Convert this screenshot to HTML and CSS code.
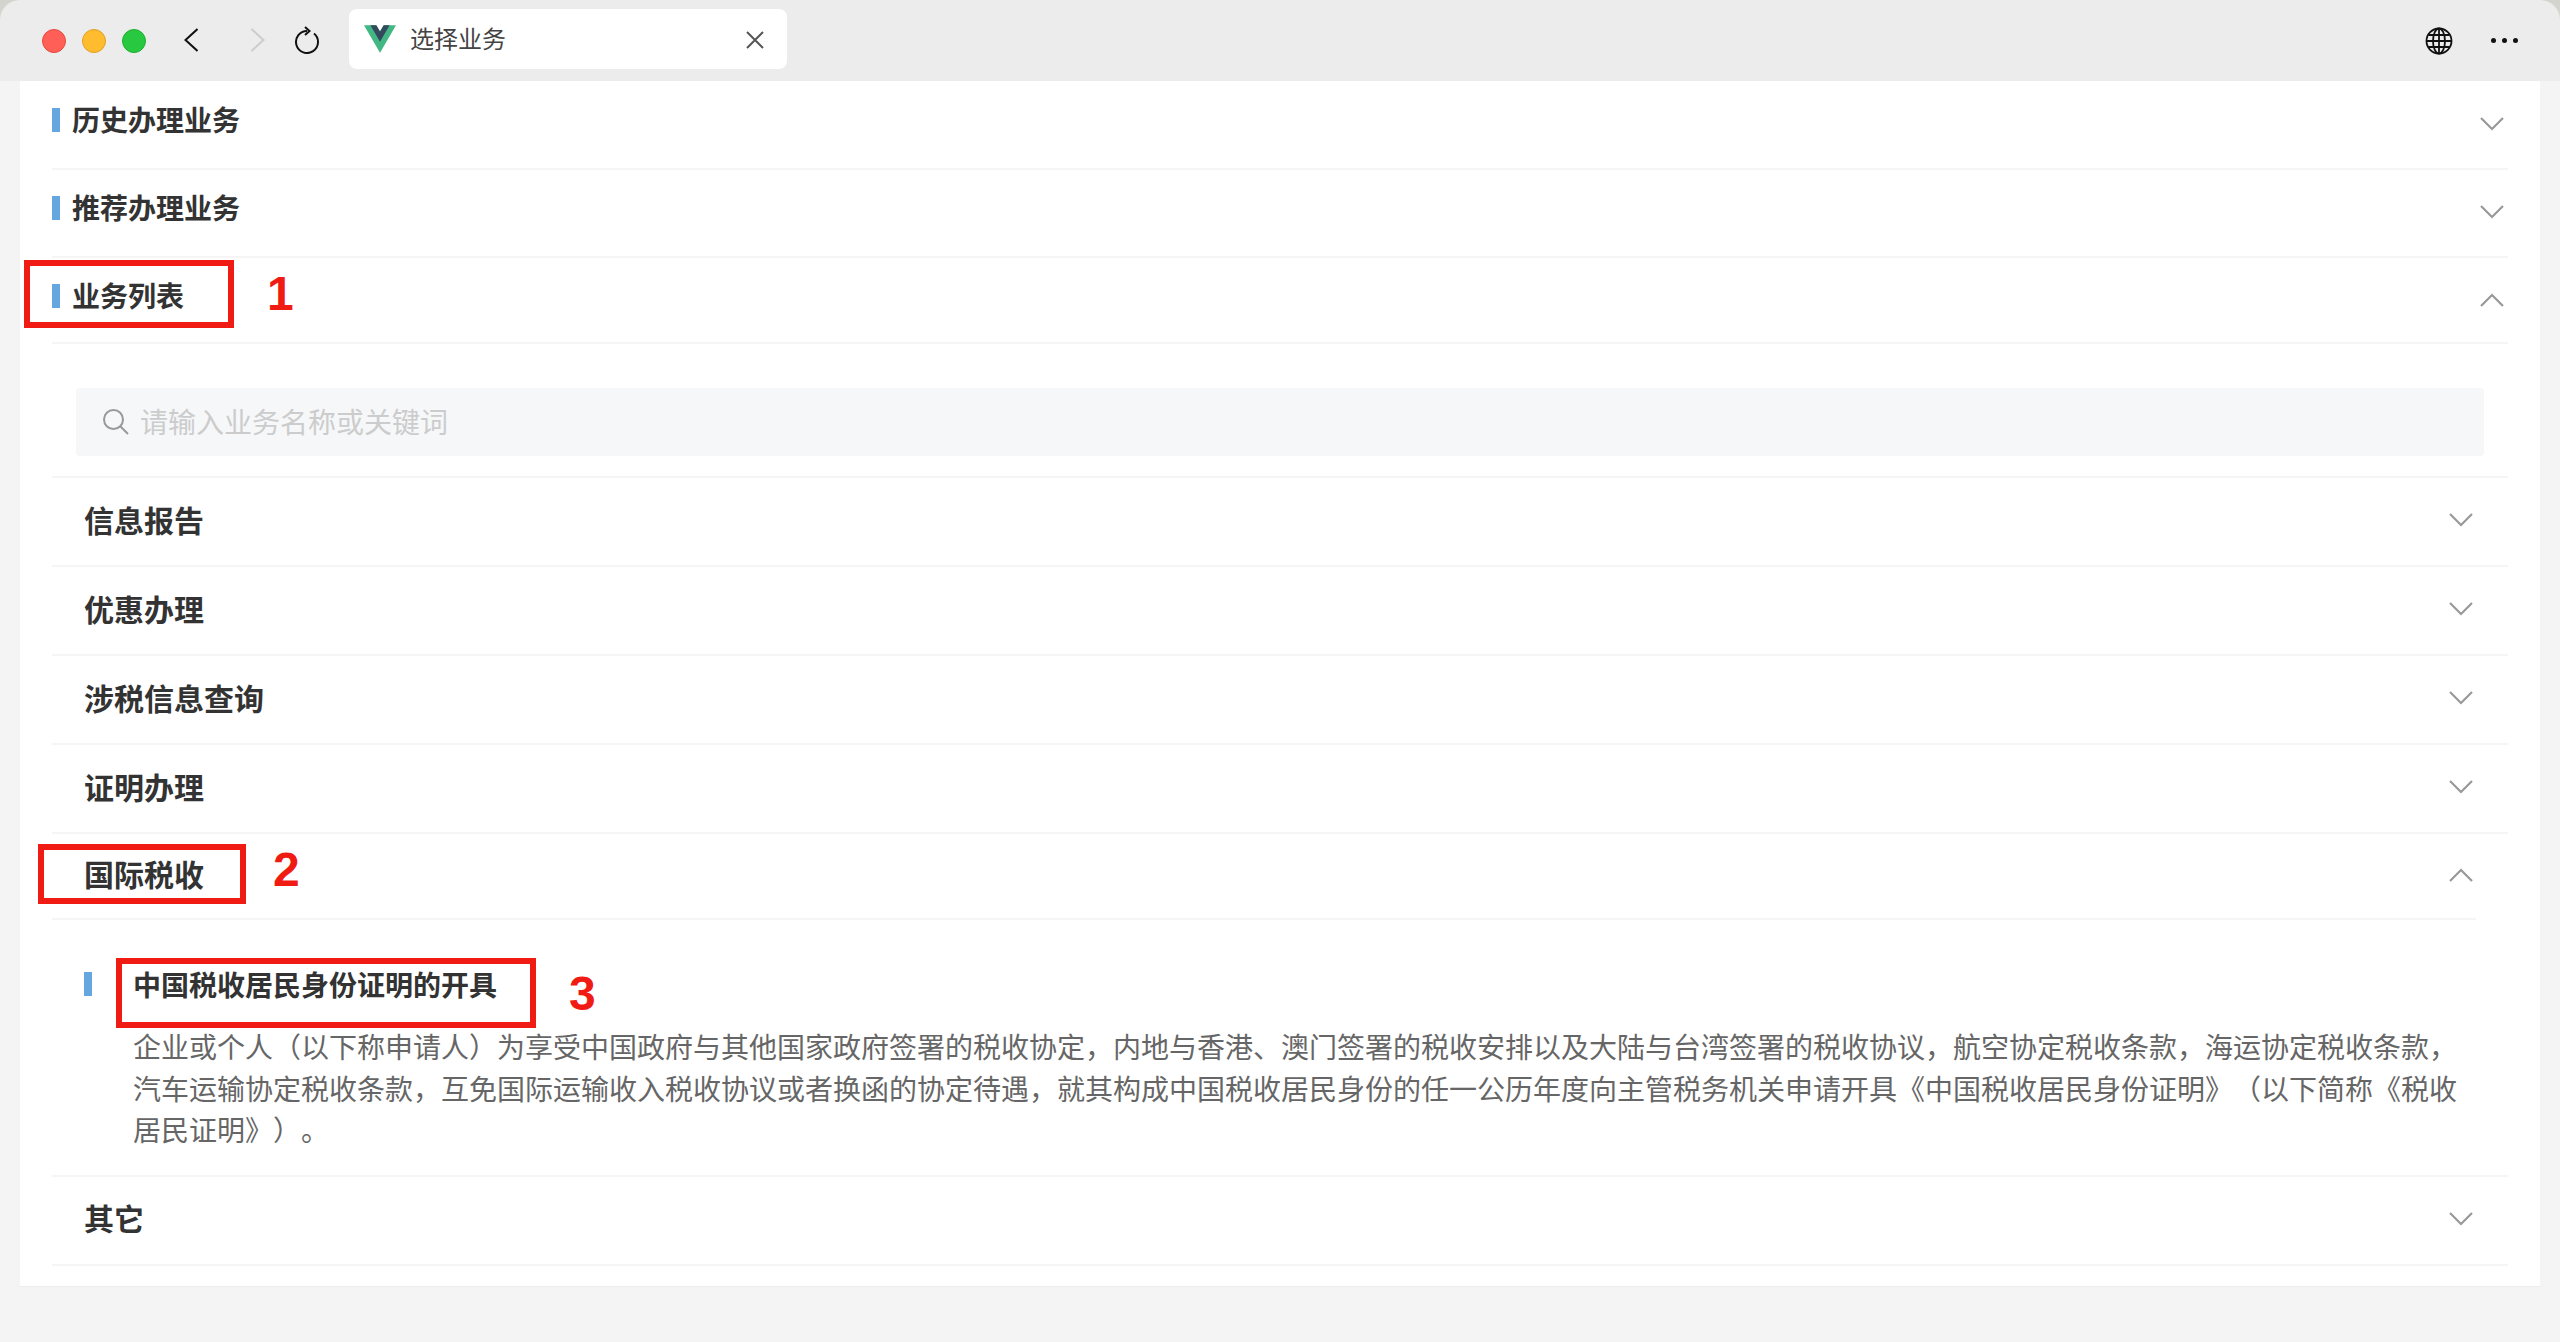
FILE: index.html
```html
<!DOCTYPE html>
<html lang="zh-CN">

<head>
    <meta charset="UTF-8">
    <meta name="viewport" content="width=device-width, initial-scale=1.0">
    <title>选择业务</title>
    <link rel="stylesheet" href="styles.css">
</head>

<body>

    <div class="window">
        <header class="toolbar">
            <div class="lights">
                <span class="light light-red"></span>
                <span class="light light-yellow"></span>
                <span class="light light-green"></span>
            </div>
            <svg class="nav-icon nav-back" viewBox="0 0 14 24"><path d="M13.5 1 1.5 12l12 11" /></svg>
            <svg class="nav-icon nav-forward" viewBox="0 0 14 24"><path d="M.5 1l12 11-12 11" /></svg>
            <svg class="nav-icon nav-reload" viewBox="0 0 26 28"><path d="M20 7.500A11 11 0 1 1 13 5" /><path d="M11 1l4.500 4-4.500 4" /></svg>
            <div class="tab">
                <svg class="tab-logo" viewBox="0 0 261.76 226.69">
                    <path d="M161.096.001l-30.225 52.351L100.647.001H-.005l130.876 226.688L261.749.001z" fill="#41b883" />
                    <path d="M161.096.001l-30.225 52.351L100.647.001H52.346l78.526 136.01L209.398.001z" fill="#34495e" />
                </svg>
                <span class="tab-title">选择业务</span>
                <svg class="tab-close" viewBox="0 0 18 18"><path d="M1 1l16 16M17 1 1 17" /></svg>
            </div>
            <svg class="globe" viewBox="0 0 28 28">
                <circle cx="14" cy="14" r="12.500" />
                <ellipse cx="14" cy="14" rx="6" ry="12.500" />
                <path d="M14 1.500v25M1.500 14h25M3.500 8h21M3.500 20h21" />
            </svg>
            <div class="more"><span></span><span></span><span></span></div>
        </header>

        <div class="page">
            <main class="card">
                <section class="section">
                    <div class="section-head">
                        <span class="bar"></span>
                        <span class="section-title">历史办理业务</span>
                        <svg class="chevron" viewBox="0 0 24 14"><path d="M1 1l11 11L23 1" /></svg>
                    </div>
                </section>
                <section class="section">
                    <div class="section-head">
                        <span class="bar"></span>
                        <span class="section-title">推荐办理业务</span>
                        <svg class="chevron" viewBox="0 0 24 14"><path d="M1 1l11 11L23 1" /></svg>
                    </div>
                </section>
                <section class="section section-open">
                    <div class="section-head">
                        <span class="bar"></span>
                        <span class="section-title">业务列表</span>
                        <svg class="chevron" viewBox="0 0 24 14"><path d="M1 13 12 2l11 11" /></svg>
                    </div>
                    <div class="search">
                        <svg class="search-icon" viewBox="0 0 26 26"><circle cx="10.500" cy="10.500" r="9.500" /><path d="M17.500 17.500 25 25" /></svg>
                        <span class="search-text">请输入业务名称或关键词</span>
                    </div>
                </section>

                <div class="group">
                    <span class="group-title">信息报告</span>
                    <svg class="chevron" viewBox="0 0 24 14"><path d="M1 1l11 11L23 1" /></svg>
                </div>
                <div class="group">
                    <span class="group-title">优惠办理</span>
                    <svg class="chevron" viewBox="0 0 24 14"><path d="M1 1l11 11L23 1" /></svg>
                </div>
                <div class="group">
                    <span class="group-title">涉税信息查询</span>
                    <svg class="chevron" viewBox="0 0 24 14"><path d="M1 1l11 11L23 1" /></svg>
                </div>
                <div class="group">
                    <span class="group-title">证明办理</span>
                    <svg class="chevron" viewBox="0 0 24 14"><path d="M1 1l11 11L23 1" /></svg>
                </div>
                <div class="group-open">
                    <div class="group group-inner">
                        <span class="group-title">国际税收</span>
                        <svg class="chevron" viewBox="0 0 24 14"><path d="M1 13 12 2l11 11" /></svg>
                    </div>
                    <div class="item">
                        <span class="bar"></span>
                        <div class="item-body">
                            <div class="item-title">中国税收居民身份证明的开具</div>
                            <p class="item-desc">企业或个人（以下称申请人）为享受中国政府与其他国家政府签署的税收协定，内地与香港、澳门签署的税收安排以及大陆与台湾签署的税收协议，航空协定税收条款，海运协定税收条款，汽车运输协定税收条款，互免国际运输收入税收协议或者换函的协定待遇，就其构成中国税收居民身份的任一公历年度向主管税务机关申请开具《中国税收居民身份证明》（以下简称《税收居民证明》）。</p>
                        </div>
                    </div>
                </div>
                <div class="group">
                    <span class="group-title">其它</span>
                    <svg class="chevron" viewBox="0 0 24 14"><path d="M1 1l11 11L23 1" /></svg>
                </div>
            </main>
        </div>

        <!-- red marks drawn on top of the screenshot -->
        <div class="mark mark-box-1"></div>
        <div class="mark-num mark-num-1">1</div>
        <div class="mark mark-box-2"></div>
        <div class="mark-num mark-num-2">2</div>
        <div class="mark mark-box-3"></div>
        <div class="mark-num mark-num-3">3</div>
    </div>

</body>

</html>
```

FILE: styles.css
```css
* {
    margin: 0;
    padding: 0;
    box-sizing: border-box;
    font-family: "Liberation Sans", "Noto Sans CJK SC", sans-serif;
    text-spacing-trim: space-all;
}

body {
    background: #d4d4ce;
}

.window {
    position: relative;
    display: flex;
    flex-direction: column;
    height: 1342px;
    overflow: hidden;
    background: #d4d4ce;
}

/* toolbar */
.toolbar {
    display: flex;
    align-items: center;
    flex: none;
    height: 81px;
    padding-left: 42px;
    background: #ececec;
    border-radius: 20px 20px 0 0;
}

.lights {
    display: flex;
    gap: 16px;
}

.light {
    width: 24px;
    height: 24px;
    border-radius: 50%;
}

.light-red {
    background: #ff5f57;
    border: 1px solid #e5483f;
}

.light-yellow {
    background: #febc2e;
    border: 1px solid #e1a024;
}

.light-green {
    background: #28c840;
    border: 1px solid #1fb032;
}

.nav-icon {
    fill: none;
    stroke: #111;
    stroke-width: 2;
}

.nav-back {
    width: 14px;
    height: 24px;
    margin-left: 38px;
    margin-top: -2px;
}

.nav-forward {
    width: 14px;
    height: 24px;
    margin-left: 53px;
    margin-top: -2px;
    stroke: #ccc;
}

.nav-reload {
    width: 26px;
    height: 28px;
    margin-left: 29px;
    margin-top: -2px;
}

.tab {
    display: flex;
    align-items: center;
    width: 438px;
    height: 60px;
    margin-left: 29px;
    margin-top: -3px;
    padding: 0 23px 0 15px;
    background: #fff;
    border-radius: 8px;
}

.tab-logo {
    width: 32px;
    height: 28px;
}

.tab-title {
    margin-left: 14px;
    margin-bottom: 3px;
    font-size: 24px;
    color: #444;
}

.tab-close {
    width: 18px;
    height: 18px;
    margin-left: auto;
    margin-top: 2px;
    fill: none;
    stroke: #555;
    stroke-width: 2;
}

.globe {
    width: 28px;
    height: 28px;
    margin-left: auto;
    fill: none;
    stroke: #111;
    stroke-width: 1.8;
}

.more {
    display: flex;
    gap: 6px;
    margin-left: 38px;
    margin-right: 42px;
}

.more span {
    width: 5px;
    height: 5px;
    border-radius: 50%;
    background: #111;
}

/* content */
.page {
    flex: 1;
    padding: 0 20px;
    background: #f4f4f4;
}

.card {
    height: 1206px;
    padding: 1px 32px 0;
    background: #fff;
    border-bottom: 1px solid #ededed;
}

.section-head {
    display: flex;
    align-items: flex-start;
    height: 88px;
    padding: 16px 4px 0 0;
    border-bottom: 2px solid #f5f5f5;
}

.section-open .section-head {
    height: 86px;
}

.bar {
    flex: none;
    width: 8px;
    height: 24px;
    background: #66a6e0;
}

.section-head .bar {
    margin-top: 10px;
    margin-right: 12px;
}

.section-title {
    font-size: 28px;
    line-height: 48px;
    font-weight: bold;
    color: #333;
}

.section-head .chevron {
    margin-top: 19px;
}

.chevron {
    flex: none;
    width: 24px;
    height: 14px;
    margin-left: auto;
    fill: none;
    stroke: #999;
    stroke-width: 2.2;
}

.search {
    display: flex;
    align-items: center;
    height: 68px;
    margin: 44px 24px 20px;
    padding-left: 27px;
    background: #f6f7f9;
    border-radius: 4px;
}

.search-icon {
    width: 26px;
    height: 26px;
    fill: none;
    stroke: #999;
    stroke-width: 2;
}

.search-text {
    margin-left: 11px;
    margin-bottom: 2px;
    font-size: 28px;
    color: #ccc;
}

.section-open {
    border-bottom: 2px solid #f5f5f5;
}

.group {
    display: flex;
    align-items: center;
    height: 89px;
    padding: 0 35px 3px 32px;
    border-bottom: 2px solid #f5f5f5;
}

.group-title {
    margin-bottom: 3px;
    font-size: 30px;
    font-weight: bold;
    color: #333;
}

.group-open {
    border-bottom: 2px solid #f5f5f5;
}

.group-inner {
    height: 86px;
    margin: 0 32px 0 0;
    padding-right: 3px;
}

.item {
    display: flex;
    padding: 46px 32px 22px 32px;
}

.item > .bar {
    margin-top: 6px;
    margin-right: 41px;
}

.item-title {
    font-size: 28px;
    line-height: 42px;
    font-weight: bold;
    color: #333;
}

.item-desc {
    margin-top: 20px;
    font-size: 28px;
    line-height: 41.6px;
    color: #666;
}

/* annotations */
.mark {
    position: absolute;
    border: 6px solid #f01c14;
}

.mark-box-1 {
    left: 24px;
    top: 260px;
    width: 210px;
    height: 68px;
}

.mark-box-2 {
    left: 38px;
    top: 844px;
    width: 208px;
    height: 60px;
}

.mark-box-3 {
    left: 116px;
    top: 958px;
    width: 420px;
    height: 70px;
}

.mark-num {
    position: absolute;
    font-size: 48px;
    line-height: 48px;
    font-weight: bold;
    color: #f01c14;
}

.mark-num-1 {
    left: 267px;
    top: 270px;
}

.mark-num-2 {
    left: 273px;
    top: 846px;
}

.mark-num-3 {
    left: 569px;
    top: 970px;
}
```
